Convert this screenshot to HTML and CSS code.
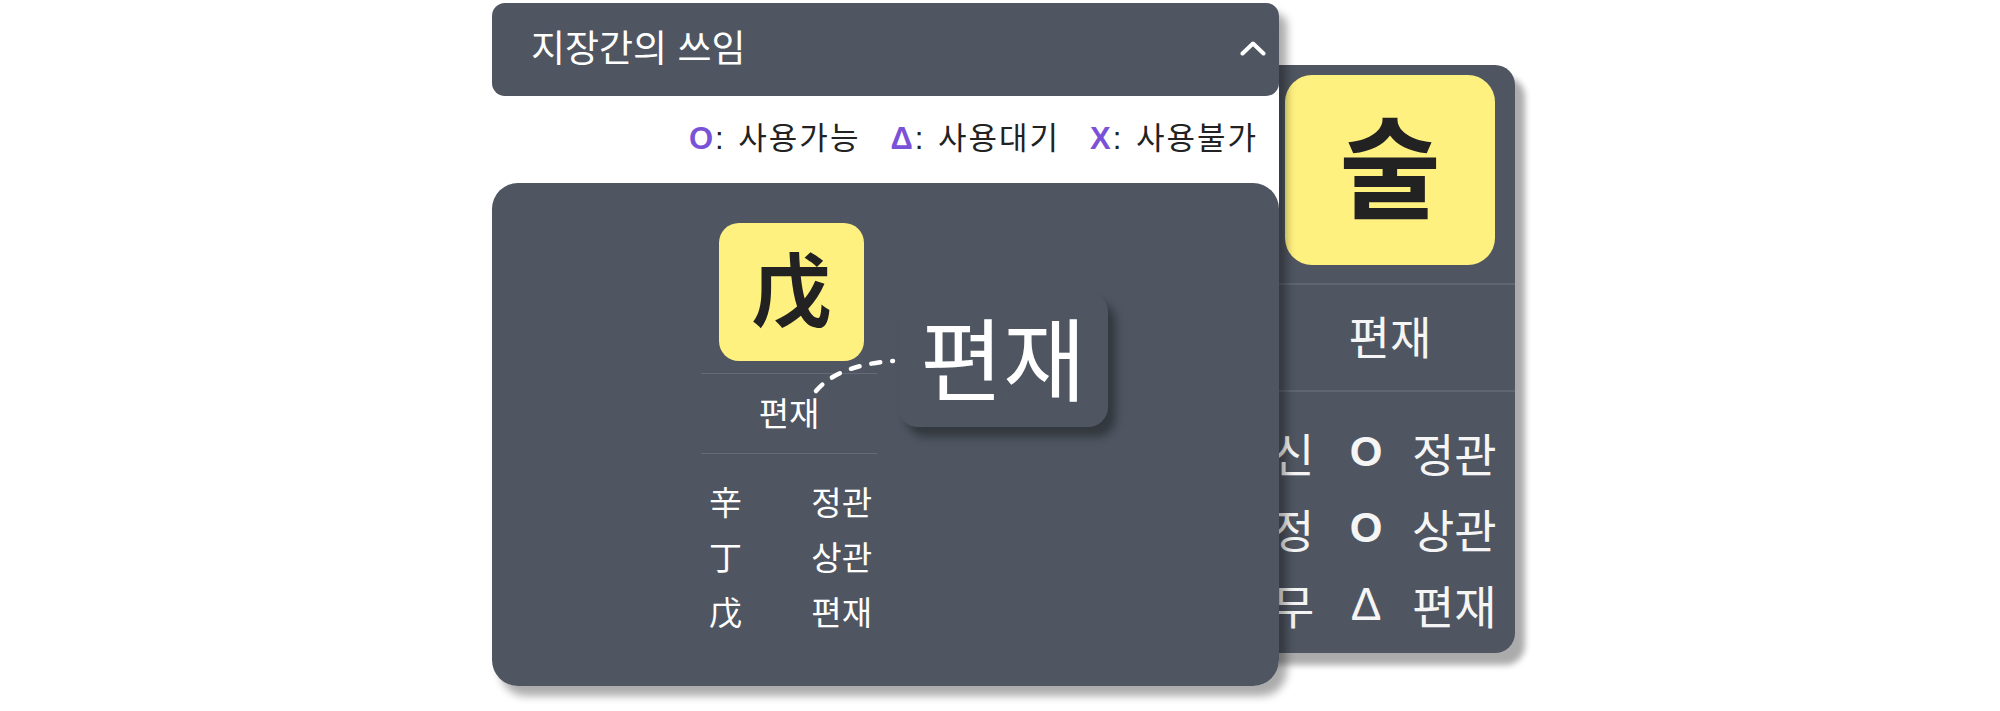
FILE: index.html
```html
<!DOCTYPE html>
<html lang="ko">
<head>
  <meta charset="UTF-8" />
  <meta name="viewport" content="width=device-width, initial-scale=1.0">
  <title>지장간의 쓰임</title>
  <link rel="stylesheet" href="styles.css">
</head>
<body>

  <div class="stage">
    <section class="panel">
      <header class="panel-head">
        <h2 class="panel-title">지장간의 쓰임</h2>
        <svg class="chevron" viewBox="0 0 26 15" aria-hidden="true">
          <polyline points="2.5,12.5 13,2.5 23.5,12.5" />
        </svg>
      </header>

      <div class="legend">
        <span class="legend-item"><b class="mark">O</b>: 사용가능</span>
        <span class="legend-item"><b class="mark">Δ</b>: 사용대기</span>
        <span class="legend-item"><b class="mark">X</b>: 사용불가</span>
      </div>

      <div class="pillar-card">
        <div class="pillar">
          <div class="gan-box">戊</div>
          <div class="pillar-name">편재</div>
          <ul class="stems">
            <li><span>辛</span><span>정관</span></li>
            <li><span>丁</span><span>상관</span></li>
            <li><span>戊</span><span>편재</span></li>
          </ul>
        </div>

        <!-- 편재 말풍선 연결선 -->
        <svg class="link-line" viewBox="0 0 100 60" aria-hidden="true">
          <path d="M14 44 Q36 18 91 14" />
        </svg>
        <div class="callout">편재</div>
      </div>
    </section>

    <section class="zoom-card">
      <div class="zoom-box">술</div>
      <div class="zoom-name">편재</div>
      <ul class="zoom-rows">
        <li><span>신</span><b class="sym">O</b><span>정관</span></li>
        <li><span>정</span><b class="sym">O</b><span>상관</span></li>
        <li><span>무</span><span class="sym thin">Δ</span><span>편재</span></li>
      </ul>
    </section>
  </div>

</body>
</html>
```

FILE: styles.css
```css
html, body {
  margin: 0;
  padding: 0;
}
*, *::before, *::after {
  box-sizing: border-box;
}
body {
  font-family: "Liberation Sans", "Noto Sans CJK KR", sans-serif;
  background: #fff;
  width: 2000px;
  height: 711px;
  overflow: hidden;
}

.stage {
  display: flex;
  align-items: flex-start;
  padding: 3px 0 0 492px;
}

/* 왼쪽 패널 */
.panel {
  position: relative;
  z-index: 2;
  width: 787px;
  background: #fff;
  border-radius: 13px 13px 26px 26px;
  box-shadow: 8px 10px 8px rgba(0, 0, 0, 0.33);
}

.panel-head {
  height: 93px;
  display: flex;
  align-items: center;
  justify-content: space-between;
  padding: 0 13px 7px 39px;
  background: #4f5661;
  border-radius: 13px;
  color: #fff;
}

.panel-title {
  margin: 0;
  font-family: "Noto Sans CJK KR", sans-serif;
  font-size: 37px;
  font-weight: 400;
  line-height: 1;
}

.chevron {
  width: 26px;
  height: 15px;
  margin-top: 5px;
  fill: none;
  stroke: #fff;
  stroke-width: 4;
  stroke-linecap: round;
  stroke-linejoin: round;
}

.legend {
  height: 87px;
  display: flex;
  justify-content: flex-end;
  align-items: center;
  gap: 30px;
  padding: 0 21px 8px 0;
  font-size: 31px;
  color: #222;
}

.legend-item {
  letter-spacing: 2px;
  word-spacing: 2px;
}

.mark {
  margin-right: 2px;
  letter-spacing: 0;
  font-weight: 700;
  color: #7a52d8;
}

/* 기둥 카드 */
.pillar-card {
  position: relative;
  height: 503px;
  background: #4f5661;
  border-radius: 26px;
  padding: 40px 0 0 209px;
  color: #fff;
}

.pillar {
  width: 176px;
}

.gan-box {
  width: 145px;
  height: 138px;
  margin-left: 18px;
  padding-bottom: 14px;
  background: #fff180;
  border-radius: 20px;
  display: flex;
  align-items: center;
  justify-content: center;
  font-family: "Noto Sans CJK KR", sans-serif;
  font-size: 80px;
  font-weight: 700;
  line-height: 1;
  color: #222;
}

.pillar-name {
  margin-top: 12px;
  height: 81px;
  padding-bottom: 4px;
  border-top: 1px solid #646b76;
  border-bottom: 1px solid #646b76;
  display: flex;
  align-items: center;
  justify-content: center;
  font-family: "Noto Sans CJK KR", sans-serif;
  font-size: 33px;
}

.stems {
  list-style: none;
  margin: 0;
  padding: 20px 5px 0 8px;
  font-family: "Noto Sans CJK KR", sans-serif;
  font-size: 33px;
}

.stems li {
  display: flex;
  justify-content: space-between;
  line-height: 55px;
}

.link-line {
  position: absolute;
  left: 310px;
  top: 164px;
  width: 100px;
  height: 60px;
  fill: none;
  stroke: #fff;
  stroke-width: 4.5;
  stroke-linecap: round;
  stroke-dasharray: 9 12;
}

.callout {
  position: absolute;
  left: 406px;
  top: 109px;
  width: 210px;
  height: 135px;
  padding-bottom: 10px;
  background: #4f5661;
  border-radius: 20px;
  box-shadow: 8px 10px 8px rgba(0, 0, 0, 0.35);
  display: flex;
  align-items: center;
  justify-content: center;
  font-family: "Noto Sans CJK KR", sans-serif;
  font-size: 90px;
  line-height: 1;
}

/* 오른쪽 확대 카드 */
.zoom-card {
  position: relative;
  z-index: 1;
  margin: 62px 0 0 -79px;
  width: 315px;
  height: 588px;
  padding-top: 10px;
  background: #4f5661;
  border-radius: 0 20px 20px 0;
  box-shadow: 10px 12px 6px rgba(0, 0, 0, 0.33);
  color: #f5f5f5;
  font-family: "Noto Sans CJK KR", sans-serif;
}

.zoom-box {
  width: 210px;
  height: 190px;
  margin-left: 85px;
  padding-bottom: 16px;
  background: #fff180;
  border-radius: 27px;
  display: flex;
  align-items: center;
  justify-content: center;
  font-size: 110px;
  font-weight: 700;
  color: #222;
  line-height: 1;
}

.zoom-name {
  margin-top: 18px;
  height: 109px;
  padding: 0 0 4px 65px;
  border-top: 2px solid #5f6671;
  border-bottom: 2px solid #5f6671;
  display: flex;
  align-items: center;
  justify-content: center;
  font-size: 45px;
}

.zoom-rows {
  list-style: none;
  margin: 0;
  padding: 22px 0 0 72px;
  font-size: 46px;
}

.zoom-rows li {
  display: grid;
  grid-template-columns: 48px 92px auto;
  line-height: 76px;
}

.sym {
  font-family: "Liberation Sans", sans-serif;
  font-size: 42px;
  text-align: center;
}

.sym.thin {
  font-weight: 400;
  font-size: 46px;
}
```
